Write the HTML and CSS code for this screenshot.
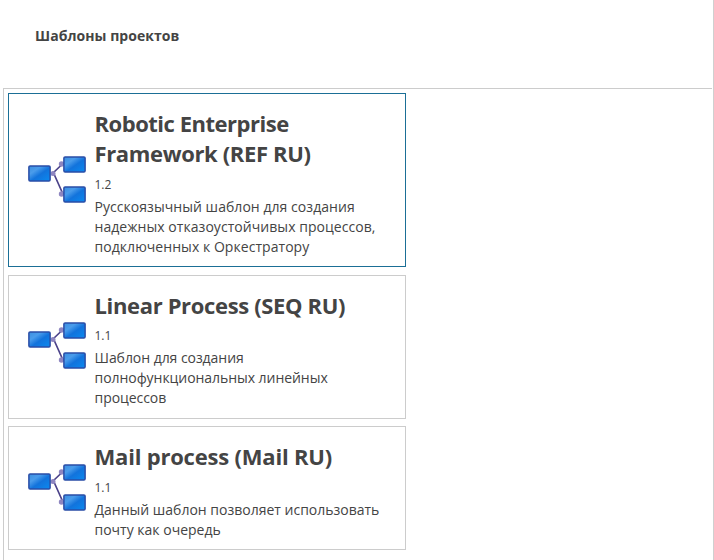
FILE: index.html
```html
<!DOCTYPE html>
<html lang="ru">
<head>
<meta charset="utf-8">
<title>Шаблоны проектов</title>
<link rel="stylesheet" href="styles.css">
</head>
<body>
<svg class="defs" width="0" height="0" aria-hidden="true">
  <defs>
    <linearGradient id="fill" x1="0" y1="0" x2="1" y2="1">
      <stop offset="0" stop-color="#3c8fe0"/><stop offset="0.3" stop-color="#4a9ceb"/><stop offset="0.55" stop-color="#1273dc"/><stop offset="1" stop-color="#0a8af0"/>
    </linearGradient>
    <symbol id="flow" viewBox="0 0 60 50">
      <path d="M25 19L35 9.500M26 20L34.500 39" fill="none" stroke="#4b4289" stroke-width="1.700"/>
      <g fill="#8e86c0">
        <circle cx="25" cy="19.500" r="2.500"/><circle cx="33.500" cy="10" r="2.700"/><circle cx="33.500" cy="40" r="2.700"/>
      </g>
      <g fill="url(#fill)" stroke="#2a4da6" stroke-width="1.500">
        <rect x="0.900" y="11.900" width="21.200" height="15" rx="1.200"/>
        <rect x="35.900" y="2.900" width="21.200" height="15" rx="1.200"/>
        <rect x="35.900" y="32.900" width="21.200" height="15" rx="1.200"/>
      </g>
    </symbol>
  </defs>
</svg>
<main class="window">
  <h1 class="heading">Шаблоны проектов</h1>
  <section class="list">
    <article class="card card-ref selected">
      <svg class="icon"><use href="#flow"/></svg>
      <div class="info">
        <h2><span class="tight">Robotic Enterprise</span><br>Framework (REF RU)</h2>
        <div class="version">1.2</div>
        <p>Русскоязычный шаблон для создания<br>надежных отказоустойчивых процессов,<br>подключенных к Оркестратору</p>
      </div>
    </article>
    <article class="card card-seq">
      <svg class="icon"><use href="#flow"/></svg>
      <div class="info">
        <h2>Linear Process (SEQ RU)</h2>
        <div class="version">1.1</div>
        <p>Шаблон для создания<br>полнофункциональных линейных<br>процессов</p>
      </div>
    </article>
    <article class="card card-mail">
      <svg class="icon"><use href="#flow"/></svg>
      <div class="info">
        <h2>Mail process (Mail RU)</h2>
        <div class="version">1.1</div>
        <p>Данный шаблон позволяет использовать<br>почту как очередь</p>
      </div>
    </article>
  </section>
</main>
</body>
</html>
```
FILE: styles.css
```css
* { box-sizing: border-box; }
body { margin: 0; background: #fff; color: #444; font-family: "Open Sans", "Noto Sans", sans-serif; overflow: hidden; }
.defs { display: block; height: 0; }
.window { width: 714px; height: 560px; display: flex; flex-direction: column; border-right: 1px solid #d0d0d0; }
.heading { margin: 0; height: 88px; padding: 26px 0 0 35px; font-size: 14px; line-height: 20px; font-weight: 700; letter-spacing: 0.05px; }
.list { flex: 1; margin: 0 1px 0 3px; padding: 4px; border: solid #ccc; border-width: 1px 0 0 1px; display: flex; flex-direction: column; gap: 8px; }
.card { width: 398px; display: flex; align-items: flex-start; border: 1px solid #ccc; padding-left: 19px; }
.card-ref { height: 174px; }
.card-seq { height: 144px; }
.card-mail { height: 124px; margin-top: -1px; }
.selected { border-color: #1b6f96; }
.icon { width: 60px; height: 50px; flex: none; margin-top: 60px; }
.card-seq .icon { margin-top: 44px; }
.card-mail .icon { margin-top: 35px; }
.info { padding: 14px 0 0 6.5px; white-space: nowrap; }
h2 { margin: 0; font-size: 22px; line-height: 30px; font-weight: 700; letter-spacing: -0.35px; }
.tight { letter-spacing: -0.48px; }
.card-mail h2 { letter-spacing: -0.2px; }
.version { font-size: 12px; line-height: 20px; margin-top: 7px; }
.card-seq .version { margin-top: 6px; }
p { margin: 2px 0 0; font-size: 14px; line-height: 20px; }
.card-ref p { letter-spacing: 0.05px; }
.card-seq p { letter-spacing: -0.05px; }
```
